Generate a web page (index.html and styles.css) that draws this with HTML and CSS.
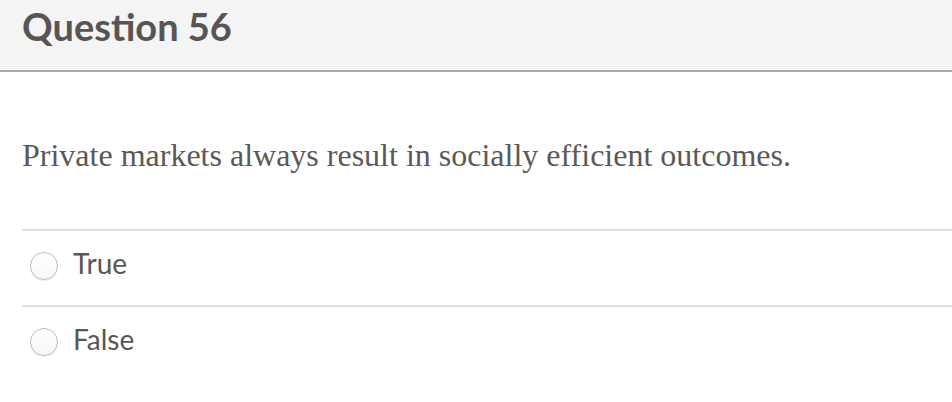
FILE: index.html
```html
<!DOCTYPE html>
<html>
<head>
<meta charset="utf-8">
<link rel="stylesheet" href="styles.css">
</head>
<body>
<div class="header">
  <h2 class="title">Question 56</h2>
</div>
<div class="body">
  <p class="question">Private markets always result in socially efficient outcomes.</p>
  <div class="answers">
    <label class="answer"><span class="radio"></span><span class="label">True</span></label>
    <label class="answer"><span class="radio"></span><span class="label">False</span></label>
  </div>
</div>
</body>
</html>
```
FILE: styles.css
```css
html, body {
  margin: 0;
  padding: 0;
  background: #fff;
}
.header {
  height: 70px;
  background: #f4f4f4;
  border-bottom: 2px solid #a9a9a9;
  padding-left: 22px;
  display: flex;
  align-items: flex-start;
}
.title {
  margin: 0;
  font-family: Lato, "Open Sans", sans-serif;
  font-weight: 700;
  font-size: 38px;
  line-height: 1;
  padding-top: 7px;
  color: #585454;
}
.body {
  padding-left: 22px;
}
.question {
  margin: 0;
  padding-top: 65px;
  height: 92px;
  box-sizing: content-box;
  font-family: "Liberation Serif", "Times New Roman", serif;
  font-size: 32px;
  line-height: 36px;
  color: #5c5858;
}
.answers {
  display: flex;
  flex-direction: column;
}
.answer {
  display: flex;
  align-items: flex-start;
  height: 74px;
  border-top: 2px solid #dedede;
  padding-left: 8px;
  gap: 15px;
}
.radio {
  width: 28px;
  height: 28px;
  border-radius: 50%;
  border: 1px solid #bdbdbd;
  background: linear-gradient(#ffffff, #f8f8f8);
  box-shadow: 0 1px 1px rgba(0,0,0,0.08);
  box-sizing: border-box;
  flex: none;
  margin-top: 21px;
}
.label {
  font-family: Lato, "Open Sans", sans-serif;
  font-size: 28px;
  line-height: 1;
  margin-top: 18px;
  color: #5a5656;
}
```
